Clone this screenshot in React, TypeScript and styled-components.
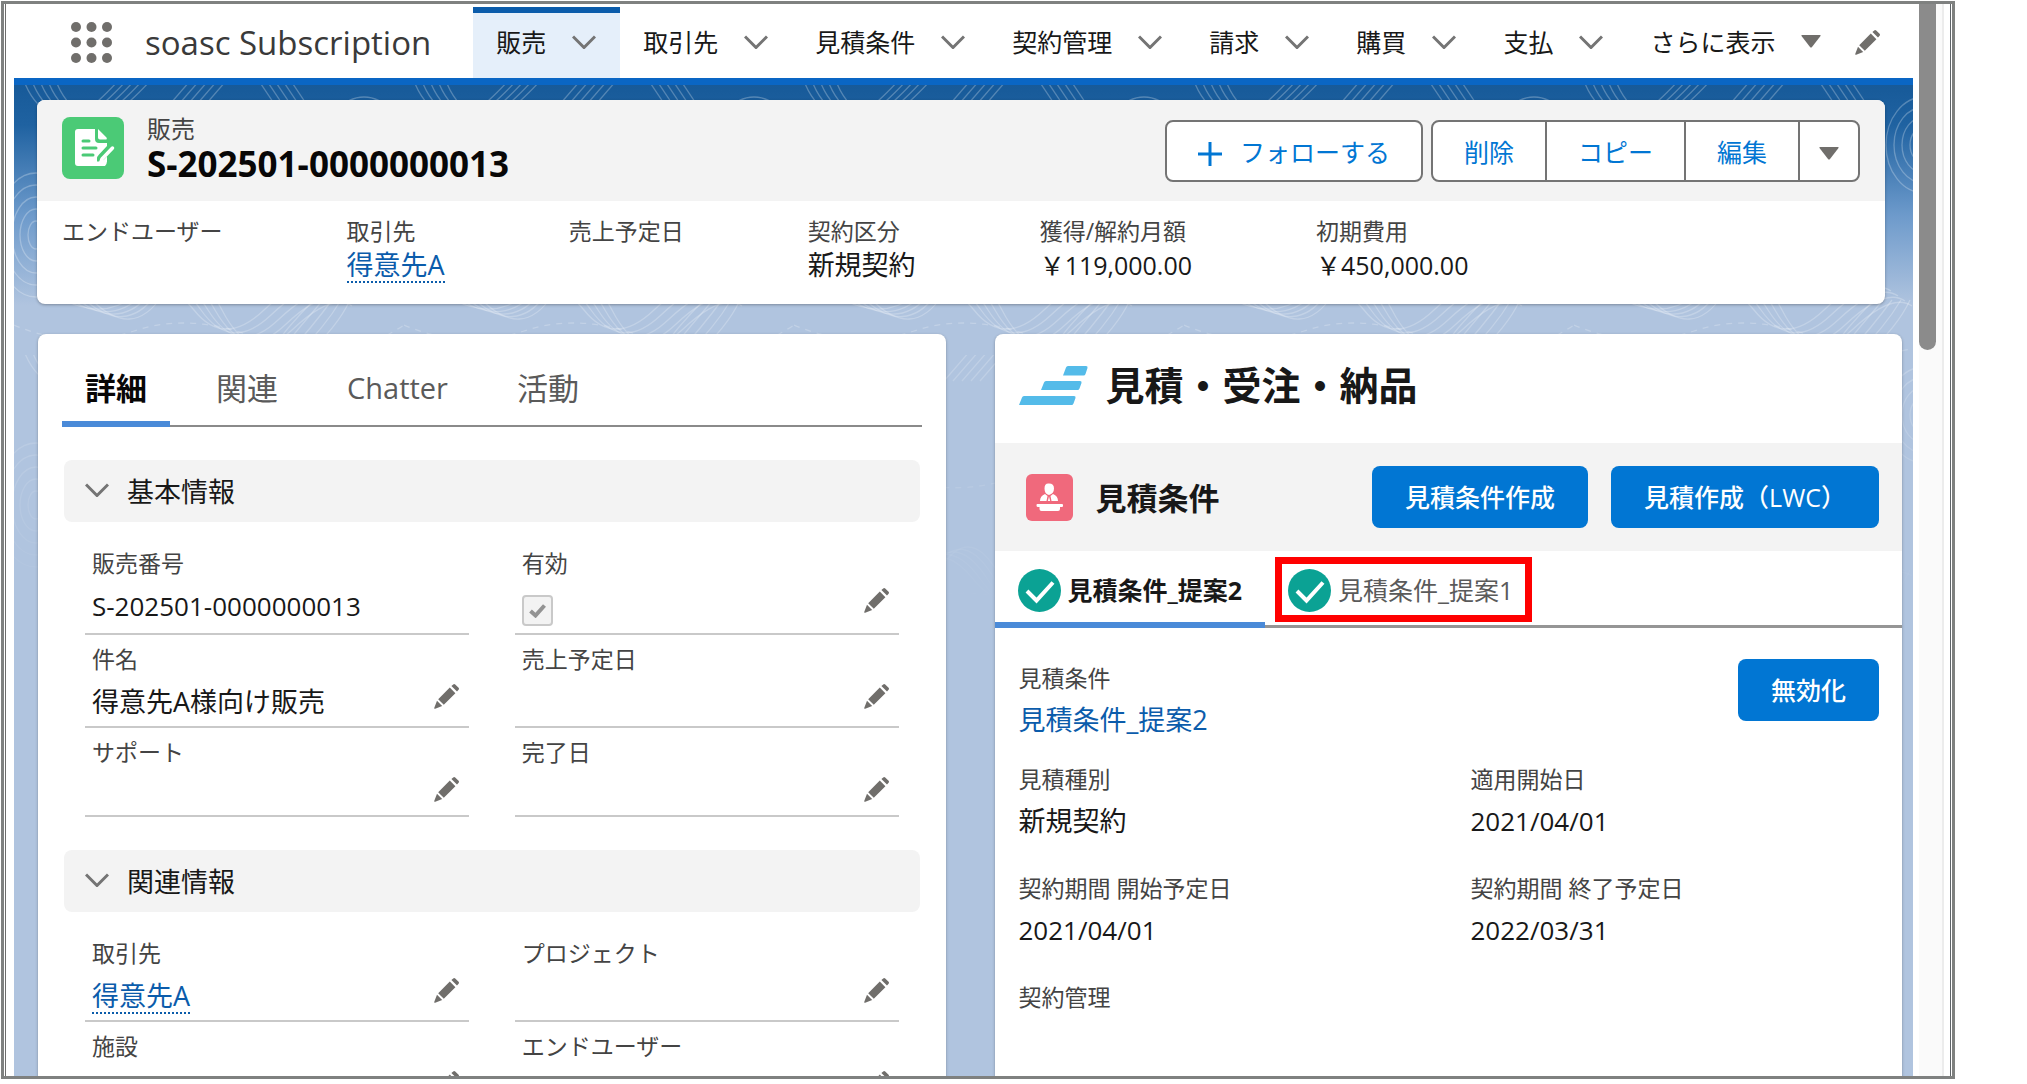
import React from "react";
import styled, { createGlobalStyle } from "styled-components";

const GlobalStyle = createGlobalStyle`
  *, *::before, *::after { box-sizing: border-box; }
  body {
    margin: 0;
    background: #fff;
    color: #181818;
    font-family: "Open Sans", "Noto Sans CJK JP", sans-serif;
    font-size: 27px;
  }
  button {
    font: inherit;
    color: inherit;
    background: none;
    border: 0;
    padding: 0;
    cursor: pointer;
    white-space: nowrap;
  }
  a { color: #0b5cab; text-decoration: none; }
  h1, h2, h3, p, dl, dd, dt, ul { margin: 0; padding: 0; font-size: inherit; font-weight: inherit; }
  ul { list-style: none; }
  svg { display: block; flex: none; }
`;

/* ---------- window ---------- */

const Window = styled.div`
  display: grid;
  grid-template-columns: minmax(0, 1fr) 39px;
  height: calc(100vh - 6px);
  margin: 1px 72px 0 1px;
  border: 3px solid #7f8180;
  overflow: hidden;
`;

const Screen = styled.div`
  min-width: 0;
  margin-left: 1px;
  border-left: 1px solid #6d6d6d;
  padding-left: 8px;
`;

const ScrollTrack = styled.div`
  margin-right: 1px;
  padding: 0 8px 0 6px;
  background: linear-gradient(90deg, #fff 0 6px, #fafafa 6px 29px, #ececec 29px 31px, #fff 31px);
  border-right: 1px solid #5f6468;
`;

const ScrollThumb = styled.div`
  width: 17px;
  height: 346px;
  border-radius: 0 0 9px 9px;
  background: #8b8b8b;
`;

/* ---------- navigation ---------- */

const NavBar = styled.header`
  display: flex;
  align-items: center;
  height: 81px;
  padding: 3px 33px 0 57px;
  border-bottom: 7px solid #0a66c4;
  background: #fff;
`;

const AppName = styled.span`
  margin: 0 42px 0 33px;
  font-size: 33px;
  line-height: 44px;
  color: #3a3a3a;
  white-space: nowrap;
`;

const NavItems = styled.ul`
  display: flex;
  align-self: stretch;
`;

const NavItem = styled.li<{ $active?: boolean }>`
  display: flex;
  align-items: center;
  gap: 26px;
  padding: 0 24px 8px 23px;
  border-top: 6px solid ${(p) => (p.$active ? "#0b5cab" : "transparent")};
  background: ${(p) => (p.$active ? "#e5effa" : "transparent")};
  font-size: 25px;
  line-height: 36px;
  a { color: #181818; white-space: nowrap; }
`;

const NavEdit = styled.button`
  margin-left: auto;
`;

/* ---------- page body ---------- */

const Backdrop = styled.main`
  position: relative;
  height: 100%;
  padding: 15px 11px 0 23px;
  background: linear-gradient(#175a99 0, #1f62a1 40px, #6d9acb 130px, #b0c4df 220px);
`;

const Topography = styled.svg`
  position: absolute;
  inset: 0;
  width: 100%;
  height: 100%;
`;

const Card = styled.section`
  position: relative;
  min-width: 0;
  border-radius: 8px;
  background: #fff;
  box-shadow: 0 1px 3px rgba(0, 0, 0, 0.3);
  overflow: hidden;
`;

const RecordCard = styled(Card)`
  margin-right: 17px;
`;

const RecordHead = styled.div`
  display: flex;
  align-items: center;
  height: 101px;
  padding: 0 25px 5px 25px;
  background: #f3f3f3;
`;

const RecordTitle = styled.div`
  margin: 0 auto 0 23px;
`;

const RecordType = styled.p`
  font-size: 24px;
  line-height: 32px;
  color: #444;
`;

const RecordName = styled.h1`
  font-size: 35px;
  font-weight: 700;
  line-height: 38px;
  color: #080707;
  white-space: nowrap;
`;

const ButtonGroup = styled.div`
  display: flex;
  margin: 6px 0 0 8px;
  border: 2px solid #747474;
  border-radius: 8px;
  background: #fff;
  overflow: hidden;
`;

const OutlineButton = styled.button<{ $pad?: number }>`
  display: flex;
  align-items: center;
  gap: 18px;
  height: 58px;
  padding: 0 ${(p) => p.$pad ?? 31}px;
  font-size: 25px;
  color: #0176d3;
  & + & { border-left: 2px solid #747474; }
  svg { margin-top: 5px; }
`;

const Highlights = styled.dl`
  display: flex;
  gap: 124px;
  height: 103px;
  padding: 13px 25px 0;
`;

const Label = styled.dt`
  font-size: 23px;
  line-height: 34px;
  color: #444;
  white-space: nowrap;
`;

const HighlightValue = styled.dd<{ $amount?: boolean }>`
  font-size: ${(p) => (p.$amount ? 25 : 27)}px;
  line-height: 34px;
  white-space: nowrap;
`;

const DottedLink = styled.a`
  display: inline-block;
  line-height: 32px;
  border-bottom: 2px dotted #0b5cab;
`;

const Columns = styled.div`
  display: grid;
  grid-template-columns: minmax(0, 1fr) minmax(0, 1fr);
  gap: 49px;
  margin: 30px 0 0 1px;
`;

/* ---------- details ---------- */

const DetailCard = styled(Card)`
  min-height: 1000px;
  padding: 0 24px;
`;

const Tabs = styled.div`
  display: flex;
  gap: 23px;
  height: 93px;
  border-bottom: 2px solid #8a8a8a;
`;

const Tab = styled.button<{ $active?: boolean; $latin?: boolean }>`
  margin-bottom: -2px;
  padding: 21px 23px 0;
  border-bottom: 6px solid ${(p) => (p.$active ? "#4a8ad8" : "transparent")};
  font-size: ${(p) => (p.$latin ? 29 : 31)}px;
  font-weight: ${(p) => (p.$active ? 700 : 400)};
  line-height: 40px;
  color: ${(p) => (p.$active ? "#080707" : "#5a5a5a")};
`;

const Section = styled.section`
  margin: 33px 2px 0;
`;

const SectionToggle = styled.button`
  display: flex;
  align-items: center;
  gap: 18px;
  width: 100%;
  height: 62px;
  margin-bottom: 24px;
  padding: 0 21px 2px;
  border-radius: 8px;
  background: #f3f3f3;
`;

const FieldGrid = styled.dl`
  display: grid;
  grid-template-columns: 1fr 1fr;
  column-gap: 46px;
  padding: 0 21px 0 21px;
`;

const Field = styled.div<{ $first?: boolean }>`
  display: grid;
  grid-template-columns: 1fr auto;
  grid-template-rows: 34px auto;
  padding: ${(p) => (p.$first ? 0 : 7)}px 10px 0 7px;
  border-bottom: 2px solid #c9c9c9;
  ${Label} { grid-column: 1 / -1; }
`;

const FieldValue = styled.dd<{ $latin?: boolean }>`
  min-height: 46px;
  padding: 5px 0 3px;
  font-size: ${(p) => (p.$latin ? 26 : 27)}px;
  line-height: 42px;
  white-space: nowrap;
`;

const EditButton = styled.button`
  align-self: start;
  padding-top: 8px;
`;

const TickBox = styled.input`
  display: block;
  appearance: none;
  width: 31px;
  height: 31px;
  margin: 10px 0 4px;
  border: 2px solid #c9c9c9;
  border-radius: 4px;
  background: #f3f3f3;
`;

const TickWrap = styled.span`
  display: grid;
  justify-content: start;
  > * { grid-area: 1 / 1; }
  svg { align-self: center; justify-self: center; margin-top: 6px; }
`;

/* ---------- quote panel ---------- */

const QuoteCard = styled(Card)`
  min-height: 1000px;
`;

const QuoteTitle = styled.div`
  display: flex;
  align-items: center;
  gap: 18px;
  height: 109px;
  padding: 0 24px 6px;
  font-size: 39px;
  font-weight: 700;
  line-height: 50px;
  h2 { padding-bottom: 2px; }
`;

const QuoteBand = styled.div`
  display: flex;
  align-items: center;
  gap: 23px;
  height: 108px;
  padding: 0 23px 0 31px;
  background: #f3f3f3;
`;

const BandHeading = styled.h3`
  margin-right: auto;
  padding-bottom: 2px;
  font-size: 31px;
  font-weight: 700;
  white-space: nowrap;
`;

const BlueButton = styled.button`
  height: 62px;
  padding: 0 33px 2px;
  border-radius: 8px;
  background: #0176d3;
  color: #fff;
  font-size: 25px;
  font-weight: 500;
`;

const QuoteTabs = styled.div`
  display: flex;
  height: 77px;
  border-bottom: 3px solid #959595;
`;

const QuoteTab = styled.button<{ $active?: boolean }>`
  position: relative;
  display: flex;
  align-items: center;
  gap: 7px;
  margin-bottom: -3px;
  padding: 8px 23px 0;
  border-bottom: 6px solid ${(p) => (p.$active ? "#4a8ad8" : "transparent")};
  font-size: 25px;
  font-weight: ${(p) => (p.$active ? 700 : 400)};
  color: ${(p) => (p.$active ? "#181818" : "#5a5a5a")};
`;

const QuoteTabText = styled.span`
  padding-bottom: 4px;
`;

const Highlight = styled.span`
  position: absolute;
  inset: 6px 4px 0 10px;
  border: 7px solid #f00;
`;

const QuoteBody = styled.div`
  padding: 31px 23px 0 24px;
`;

const QuoteLead = styled.div`
  display: flex;
  justify-content: space-between;
  align-items: flex-start;
  margin-bottom: 17px;
`;

const QuoteFields = styled.dl`
  display: grid;
  grid-template-columns: 452px 1fr;
  row-gap: 25px;
`;

const QuoteValue = styled.dd<{ $latin?: boolean }>`
  height: 50px;
  font-size: ${(p) => (p.$latin ? 26 : 27)}px;
  line-height: 50px;
  white-space: nowrap;
`;

const LeadList = styled.dl`
  padding-top: 2px;
`;

/* ---------- drawings ---------- */

const Chevron = () => (
  <svg width="24" height="14" viewBox="0 0 24 14" fill="none" stroke="#747474" strokeWidth="3" aria-hidden>
    <path d="M1 1.5 12 12.5 23 1.5" />
  </svg>
);

const Triangle = () => (
  <svg width="20" height="13" viewBox="0 0 20 13" fill="#706e6b" aria-hidden>
    <path d="M1 0h18q1 0 .5 1L11 12q-1 1-2 0L.5 1Q0 0 1 0Z" />
  </svg>
);

const Pencil = () => (
  <svg width="25" height="25" viewBox="0 0 25 25" fill="#706e6b" aria-hidden>
    <path d="M15.8 3.600 21.400 9.200 9.800 20.800 4.200 15.200ZM17.400 2l1.800-1.600q1-.8 2 0l3.400 3.400q.8 1 0 2L23 7.600ZM3 16.800 8.200 22 1.200 24.700Q0 25 .3 23.800Z" />
  </svg>
);

const Waffle = () => (
  <svg width="41" height="41" viewBox="0 0 41 41" fill="#706e6b" aria-hidden>
    {[5, 20.500, 36].map((y) => [5, 20.500, 36].map((x) => <circle key={`${x}-${y}`} cx={x} cy={y} r="5" />))}
  </svg>
);

const Plus = () => (
  <svg width="24" height="24" viewBox="0 0 24 24" stroke="#0176d3" strokeWidth="3" aria-hidden>
    <path d="M12 0v24M0 12h24" />
  </svg>
);

const SalesIcon = () => (
  <svg width="62" height="62" viewBox="0 0 62 62" aria-hidden>
    <rect width="62" height="62" rx="8" fill="#4bca76" />
    <path
      fill="#fff"
      d="M16 12h17v10q0 4 4 4h8v3l-8 8.500q-2 2-2 4v3h3q2 0 4-2l3-3v5q0 2-2 4.500H16q-3 0-3-3V15q0-3 3-3ZM36 12l8.500 8.500q1 2-1 2H38q-2 0-2-2Z"
    />
    <path d="M21 24h6M21 31h13M21 38h10" stroke="#4bca76" strokeWidth="3" strokeLinecap="round" />
    <path d="M50.500 31 40 42l-1.500 4" stroke="#fff" strokeWidth="3.500" strokeLinecap="round" fill="none" />
  </svg>
);

const QuoteLogo = () => (
  <svg width="69" height="40" viewBox="0 0 69 40" fill="#54bbe9" aria-hidden>
    <path d="M49 0h18q2 0 1.500 2l-2 6q-.5 1.500-2 1.500H44l3-8Q47.500 0 49 0ZM27 15h34q2 0 1.500 2l-2 5.500Q60 24 58.500 24H22l3-7.500Q25.500 15 27 15ZM5 30h50q2 0 1.500 2l-2 5.500Q54 39 52.500 39H0l3-7.500Q3.500 30 5 30Z" />
  </svg>
);

const QuoteIcon = () => (
  <svg width="47" height="47" viewBox="0 0 47 47" aria-hidden>
    <rect width="47" height="47" rx="6" fill="#f0697c" />
    <g fill="#fff">
      <path d="M23 9.500q5 0 5 5T23 21q-4.500-1-4.500-6.500T23 9.500Z" />
      <path d="M19 20q-5 2-5 7h6.500l1-5ZM27 20q5 2 5 7h-6.500l-1-5Z" />
      <path d="M23 22.500l1.200 4.500h-2.400ZM11 30h25q1 0 1 1v1q0 1-1 1h-2v2q0 2-2 2H15.500q-2 0-2-2v-2H12q-1.500 0-1.500-1.500T11 30Z" />
    </g>
  </svg>
);

const CheckBadge = () => (
  <svg width="43" height="43" viewBox="0 0 43 43" aria-hidden>
    <circle cx="21.500" cy="21.500" r="21.500" fill="#0ba294" />
    <path d="M9 22l9.500 9.500L35 13.500" stroke="#fff" strokeWidth="4" fill="none" />
  </svg>
);

const Tick = () => (
  <svg width="17" height="14" viewBox="0 0 17 14" aria-hidden>
    <path d="M1.500 7 6.500 11.500 15.500 1.500" stroke="#939393" strokeWidth="4" fill="none" />
  </svg>
);

const Contours = () => (
  <Topography aria-hidden>
    <defs>
      <pattern id="contours" width="390" height="270" patternUnits="userSpaceOnUse">
        <g fill="none" stroke="#fff" strokeOpacity="0.260" strokeWidth="1.300">
          {[0, 1, 2, 3, 4].map((i) => (
            <React.Fragment key={i}>
              <path d={`M${10 + i * 8} -4q10 26 30 34t44-14 26-30`} />
              <path d={`M${150 + i * 9} 26l26-30`} />
              <path d={`M${245 + i * 8} -4l20 30`} />
              <ellipse cx="22" cy="150" rx={8 + i * 8} ry={14 + i * 12} />
              <path d={`M${50 + i * 7} 215q40 ${20 + i * 5} 70 -4t60 14 70 ${i * 5} 60 -24`} />
              <path d={`M${300 + i * 9} 215q-${30 - i * 4} 30 -50 60`} />
              <ellipse cx="350" cy="60" rx={6 + i * 8} ry={8 + i * 10} />
            </React.Fragment>
          ))}
          <path d="M0 240q60 26 120 6t130 10 140-16M60 100q90 60 190 10" strokeDasharray="6 6" />
        </g>
      </pattern>
      <linearGradient id="fade" x1="0" y1="0" x2="0" y2="1">
        <stop offset="0.150" stopColor="#fff" />
        <stop offset="0.400" stopColor="#000" />
      </linearGradient>
      <mask id="fadeMask">
        <rect width="100%" height="100%" fill="url(#fade)" />
      </mask>
    </defs>
    <rect width="100%" height="100%" fill="url(#contours)" mask="url(#fadeMask)" />
  </Topography>
);

/* ---------- data ---------- */

const navItems = ["販売", "取引先", "見積条件", "契約管理", "請求", "購買", "支払"];

type FieldData = {
  label: string;
  text?: string;
  link?: string;
  latin?: boolean;
  checked?: boolean;
  locked?: boolean;
};

const sections: { title: string; fields: FieldData[] }[] = [
  {
    title: "基本情報",
    fields: [
      { label: "販売番号", text: "S-202501-0000000013", latin: true, locked: true },
      { label: "有効", checked: true },
      { label: "件名", text: "得意先A様向け販売" },
      { label: "売上予定日" },
      { label: "サポート" },
      { label: "完了日" },
    ],
  },
  {
    title: "関連情報",
    fields: [
      { label: "取引先", link: "得意先A" },
      { label: "プロジェクト" },
      { label: "施設" },
      { label: "エンドユーザー" },
    ],
  },
];

const highlights = [
  { label: "エンドユーザー" },
  { label: "取引先", link: "得意先A" },
  { label: "売上予定日" },
  { label: "契約区分", text: "新規契約" },
  { label: "獲得/解約月額", text: "￥119,000.00", amount: true },
  { label: "初期費用", text: "￥450,000.00", amount: true },
];

const quoteFields = [
  { label: "見積種別", text: "新規契約" },
  { label: "適用開始日", text: "2021/04/01", latin: true },
  { label: "契約期間 開始予定日", text: "2021/04/01", latin: true },
  { label: "契約期間 終了予定日", text: "2022/03/31", latin: true },
  { label: "契約管理" },
];

const DetailField = ({ field, first }: { field: FieldData; first: boolean }) => (
  <Field $first={first}>
    <Label>{field.checked ? <label htmlFor="active-flag">{field.label}</label> : field.label}</Label>
    <FieldValue $latin={field.latin}>
      {field.text}
      {field.link && <DottedLink href="#">{field.link}</DottedLink>}
      {field.checked && (
        <TickWrap>
          <TickBox id="active-flag" type="checkbox" defaultChecked disabled />
          <Tick />
        </TickWrap>
      )}
    </FieldValue>
    {!field.locked && (
      <EditButton aria-label={`${field.label} 編集`}>
        <Pencil />
      </EditButton>
    )}
  </Field>
);

export default function App() {
  return (
    <>
      <GlobalStyle />
      <Window lang="ja">
        <Screen>
          <NavBar>
            <button aria-label="アプリケーションランチャー">
              <Waffle />
            </button>
            <AppName>soasc Subscription</AppName>
            <NavItems>
              {navItems.map((item, i) => (
                <NavItem key={item} $active={i === 0}>
                  <a href="#">{item}</a>
                  <Chevron />
                </NavItem>
              ))}
              <NavItem>
                <a href="#">さらに表示</a>
                <Triangle />
              </NavItem>
            </NavItems>
            <NavEdit aria-label="ナビゲーション編集">
              <Pencil />
            </NavEdit>
          </NavBar>

          <Backdrop>
            <Contours />
            <RecordCard>
              <RecordHead>
                <SalesIcon />
                <RecordTitle>
                  <RecordType>販売</RecordType>
                  <RecordName>S-202501-0000000013</RecordName>
                </RecordTitle>
                <ButtonGroup>
                  <OutlineButton>
                    <Plus />
                    フォローする
                  </OutlineButton>
                </ButtonGroup>
                <ButtonGroup>
                  <OutlineButton>削除</OutlineButton>
                  <OutlineButton>コピー</OutlineButton>
                  <OutlineButton>編集</OutlineButton>
                  <OutlineButton $pad={19} aria-label="その他のアクション">
                    <Triangle />
                  </OutlineButton>
                </ButtonGroup>
              </RecordHead>
              <Highlights>
                {highlights.map((h) => (
                  <div key={h.label}>
                    <Label>{h.label}</Label>
                    <HighlightValue $amount={h.amount}>
                      {h.text}
                      {h.link && <DottedLink href="#">{h.link}</DottedLink>}
                    </HighlightValue>
                  </div>
                ))}
              </Highlights>
            </RecordCard>

            <Columns>
              <DetailCard>
                <Tabs>
                  <Tab $active>詳細</Tab>
                  <Tab>関連</Tab>
                  <Tab $latin>Chatter</Tab>
                  <Tab>活動</Tab>
                </Tabs>
                {sections.map((s) => (
                  <Section key={s.title}>
                    <SectionToggle>
                      <Chevron />
                      {s.title}
                    </SectionToggle>
                    <FieldGrid>
                      {s.fields.map((f, i) => (
                        <DetailField key={f.label} field={f} first={i < 2} />
                      ))}
                    </FieldGrid>
                  </Section>
                ))}
              </DetailCard>

              <QuoteCard>
                <QuoteTitle>
                  <QuoteLogo />
                  <h2>見積・受注・納品</h2>
                </QuoteTitle>
                <QuoteBand>
                  <QuoteIcon />
                  <BandHeading>見積条件</BandHeading>
                  <BlueButton>見積条件作成</BlueButton>
                  <BlueButton>見積作成（LWC）</BlueButton>
                </QuoteBand>
                <QuoteTabs>
                  <QuoteTab $active>
                    <CheckBadge />
                    <QuoteTabText>見積条件_提案2</QuoteTabText>
                  </QuoteTab>
                  <QuoteTab>
                    <CheckBadge />
                    <QuoteTabText>見積条件_提案1</QuoteTabText>
                    <Highlight />
                  </QuoteTab>
                </QuoteTabs>
                <QuoteBody>
                  <QuoteLead>
                    <LeadList>
                      <Label>見積条件</Label>
                      <QuoteValue>
                        <a href="#">見積条件_提案2</a>
                      </QuoteValue>
                    </LeadList>
                    <BlueButton>無効化</BlueButton>
                  </QuoteLead>
                  <QuoteFields>
                    {quoteFields.map((f) => (
                      <div key={f.label}>
                        <Label>{f.label}</Label>
                        <QuoteValue $latin={f.latin}>{f.text}</QuoteValue>
                      </div>
                    ))}
                  </QuoteFields>
                </QuoteBody>
              </QuoteCard>
            </Columns>
          </Backdrop>
        </Screen>
        <ScrollTrack>
          <ScrollThumb />
        </ScrollTrack>
      </Window>
    </>
  );
}
